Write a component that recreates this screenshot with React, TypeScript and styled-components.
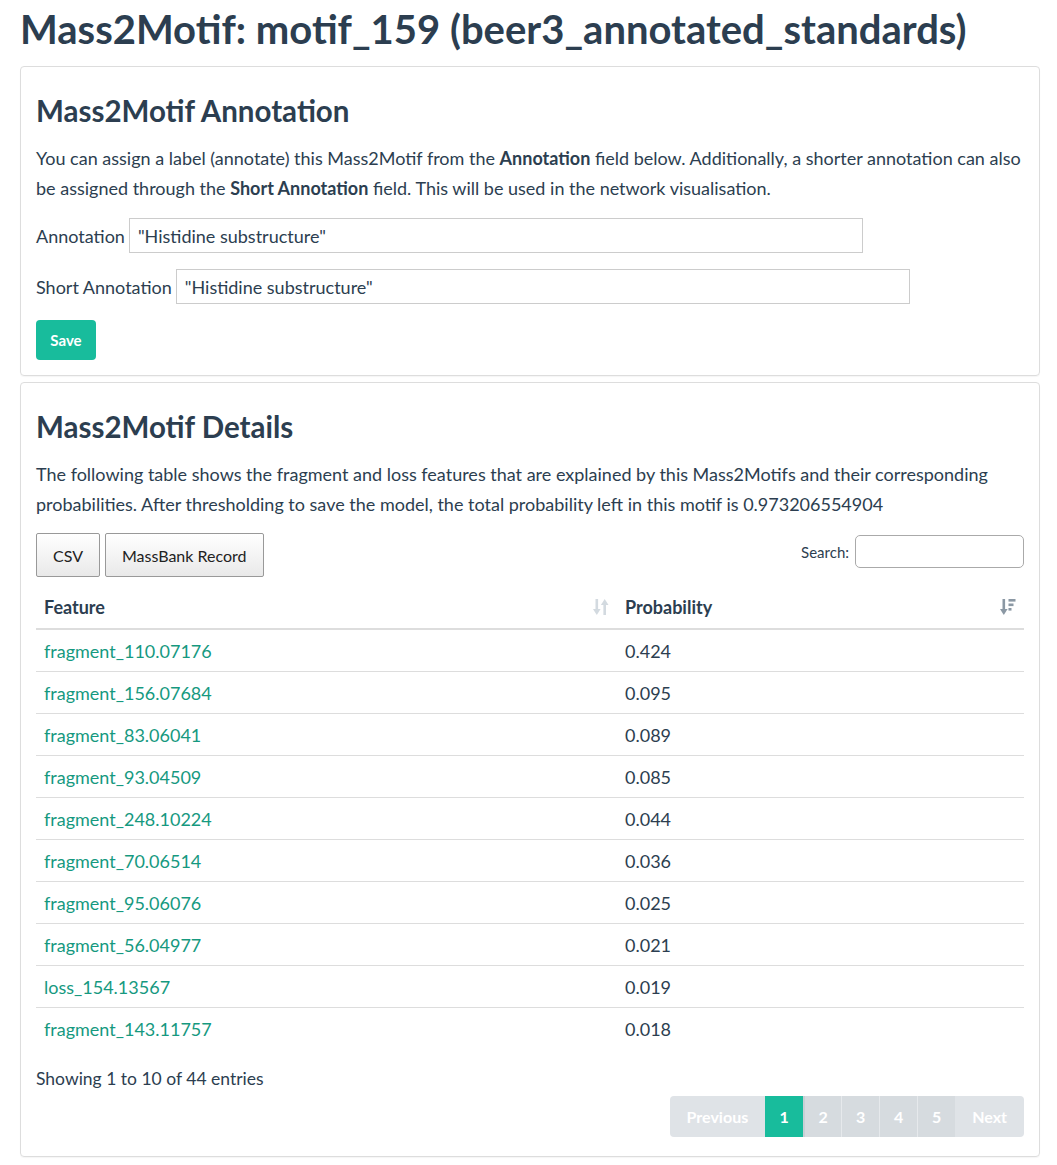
import React from 'react';
import styled, { createGlobalStyle } from 'styled-components';

const GlobalStyle = createGlobalStyle`
  body {
    margin: 0;
    padding: 8px 17px 0 20px;
    background: #fff;
    font-family: Lato, 'Open Sans', sans-serif;
    color: #2c3e50;
  }
`;

const rows = [
  ['fragment_110.07176', '0.424'],
  ['fragment_156.07684', '0.095'],
  ['fragment_83.06041', '0.089'],
  ['fragment_93.04509', '0.085'],
  ['fragment_248.10224', '0.044'],
  ['fragment_70.06514', '0.036'],
  ['fragment_95.06076', '0.025'],
  ['fragment_56.04977', '0.021'],
  ['loss_154.13567', '0.019'],
  ['fragment_143.11757', '0.018'],
];

const Title = styled.h1`
  margin: 0 0 15px;
  font-size: 40px;
  line-height: 43px;
  font-weight: 700;
  color: #2c3e50;
`;

const Panel = styled.section`
  border: 1px solid #dddddd;
  border-radius: 4px;
  padding: 15px;
  margin-bottom: 6px;
  box-shadow: 0 1px 1px rgba(0, 0, 0, 0.04);
`;

const Heading = styled.h2`
  margin: 11px 0 15px;
  font-size: 29.5px;
  line-height: 35px;
  font-weight: 700;
`;

const Text = styled.p`
  margin: 0 0 15px;
  font-size: 18px;
  line-height: 30px;
`;

const FieldRow = styled.div`
  display: flex;
  align-items: center;
  gap: 4px;
  font-size: 18px;
  margin-bottom: 16px;
`;

const TextInput = styled.input`
  width: 734px;
  height: 35px;
  box-sizing: border-box;
  border: 1px solid #cccccc;
  border-radius: 0;
  padding: 0 8px;
  font-family: Lato, sans-serif;
  font-size: 18px;
  color: #2c3e50;
  outline: none;
`;

const SaveButton = styled.button`
  display: block;
  background: #18bc9c;
  color: #fff;
  border: none;
  border-radius: 4px;
  width: 60px;
  height: 40px;
  font-family: Lato, sans-serif;
  font-weight: 700;
  font-size: 15px;
  cursor: pointer;
`;

const Toolbar = styled.div`
  display: flex;
  justify-content: space-between;
  align-items: flex-start;
  margin-top: -1px;
  margin-bottom: 9px;
`;

const ButtonGroup = styled.div`
  display: flex;
  gap: 5px;
`;

const ToolButton = styled.button`
  height: 44px;
  padding: 0 16px;
  border: 1px solid #999;
  border-radius: 2px;
  background: linear-gradient(to bottom, #ffffff 0%, #e9e9e9 100%);
  font-family: Lato, sans-serif;
  font-size: 16px;
  color: #222;
`;

const SearchLabel = styled.label`
  display: flex;
  align-items: center;
  gap: 6px;
  font-size: 15px;
  margin-top: 2px;
`;

const SearchInput = styled.input`
  width: 169px;
  height: 33px;
  box-sizing: border-box;
  border: 1px solid #aaa;
  border-radius: 5px;
  outline: none;
`;

const Table = styled.table`
  width: 100%;
  border-collapse: collapse;
  font-size: 18px;
`;

const HeadCell = styled.th<{ $w?: string }>`
  text-align: left;
  font-weight: 700;
  padding: 0 8px;
  height: 42px;
  width: ${(p) => p.$w || 'auto'};
  border-bottom: 2px solid #dddddd;
`;

const HeadInner = styled.div`
  display: flex;
  align-items: center;
  justify-content: space-between;
`;

const Cell = styled.td`
  padding: 0 8px;
  height: 41px;
  border-top: 1px solid #dddddd;
`;

const BodyRow = styled.tr`
  &:first-child td {
    border-top: none;
  }
`;

const FeatureLink = styled.a`
  color: #16997f;
  text-decoration: none;
`;

const Info = styled.div`
  font-size: 17.5px;
  margin-top: 19px;
`;

const PagerWrap = styled.div`
  display: flex;
  justify-content: flex-end;
  margin-top: 7px;
  margin-bottom: 4px;
`;

const Pager = styled.div`
  display: flex;
  border-radius: 4px;
  overflow: hidden;
`;

const PageItem = styled.span<{ $kind: 'edge' | 'num' | 'active' }>`
  display: flex;
  align-items: center;
  justify-content: center;
  height: 41px;
  padding: 0 ${(p) => (p.$kind === 'edge' ? '17px' : '0')};
  width: ${(p) => (p.$kind === 'edge' ? 'auto' : '38px')};
  background: ${(p) =>
    p.$kind === 'active' ? '#18bc9c' : p.$kind === 'num' ? '#d6dbdf' : '#dfe3e7'};
  color: #fff;
  font-weight: 700;
  font-size: 16px;
  box-sizing: border-box;
  border-left: ${(p) => (p.$kind === 'num' ? '1px solid #e6e9ec' : 'none')};
  &:nth-child(3) {
    border-left: 2px solid #c8cfd5;
  }
`;

const SortBoth = () => (
  <svg width="16" height="18" viewBox="0 0 16 18">
    <g fill="#d3dae0">
      <rect x="2.5" y="1" width="2.6" height="12" />
      <path d="M0 11 L3.8 17 L7.6 11 Z" />
      <rect x="10.4" y="5" width="2.6" height="12" />
      <path d="M7.9 7 L11.7 1 L15.5 7 Z" />
    </g>
  </svg>
);

const SortDesc = () => (
  <svg width="16" height="18" viewBox="0 0 16 18">
    <g fill="#8b98a4">
      <rect x="2.5" y="1" width="2.6" height="12" />
      <path d="M0 11 L3.8 17 L7.6 11 Z" />
      <rect x="8.5" y="1" width="7" height="2.6" />
      <rect x="8.5" y="5.5" width="5" height="2.6" />
      <rect x="8.5" y="10" width="3" height="2.6" />
    </g>
  </svg>
);

const App = () => {
  return (
    <>
      <GlobalStyle />
      <Title>Mass2Motif: motif_159 (beer3_annotated_standards)</Title>

      <Panel>
        <Heading>Mass2Motif Annotation</Heading>
        <Text>
          You can assign a label (annotate) this Mass2Motif from the <b>Annotation</b> field below. Additionally, a
          shorter annotation can also be assigned through the <b>Short Annotation</b> field. This will be used in the
          network visualisation.
        </Text>
        <FieldRow>
          <span>Annotation</span>
          <TextInput defaultValue={'"Histidine substructure"'} />
        </FieldRow>
        <FieldRow>
          <span>Short Annotation</span>
          <TextInput defaultValue={'"Histidine substructure"'} />
        </FieldRow>
        <SaveButton>Save</SaveButton>
      </Panel>

      <Panel>
        <Heading>Mass2Motif Details</Heading>
        <Text>
          The following table shows the fragment and loss features that are explained by this Mass2Motifs and their
          corresponding probabilities. After thresholding to save the model, the total probability left in this motif
          is 0.973206554904
        </Text>
        <Toolbar>
          <ButtonGroup>
            <ToolButton>CSV</ToolButton>
            <ToolButton>MassBank Record</ToolButton>
          </ButtonGroup>
          <SearchLabel>
            Search:
            <SearchInput />
          </SearchLabel>
        </Toolbar>
        <Table>
          <thead>
            <tr>
              <HeadCell $w="565px">
                <HeadInner>
                  Feature
                  <SortBoth />
                </HeadInner>
              </HeadCell>
              <HeadCell>
                <HeadInner>
                  Probability
                  <SortDesc />
                </HeadInner>
              </HeadCell>
            </tr>
          </thead>
          <tbody>
            {rows.map(([f, p]) => (
              <BodyRow key={f}>
                <Cell>
                  <FeatureLink href="#">{f}</FeatureLink>
                </Cell>
                <Cell>{p}</Cell>
              </BodyRow>
            ))}
          </tbody>
        </Table>
        <Info>Showing 1 to 10 of 44 entries</Info>
        <PagerWrap>
          <Pager>
            <PageItem $kind="edge">Previous</PageItem>
            <PageItem $kind="active">1</PageItem>
            <PageItem $kind="num">2</PageItem>
            <PageItem $kind="num">3</PageItem>
            <PageItem $kind="num">4</PageItem>
            <PageItem $kind="num">5</PageItem>
            <PageItem $kind="edge">Next</PageItem>
          </Pager>
        </PagerWrap>
      </Panel>
    </>
  );
};

export default App;
